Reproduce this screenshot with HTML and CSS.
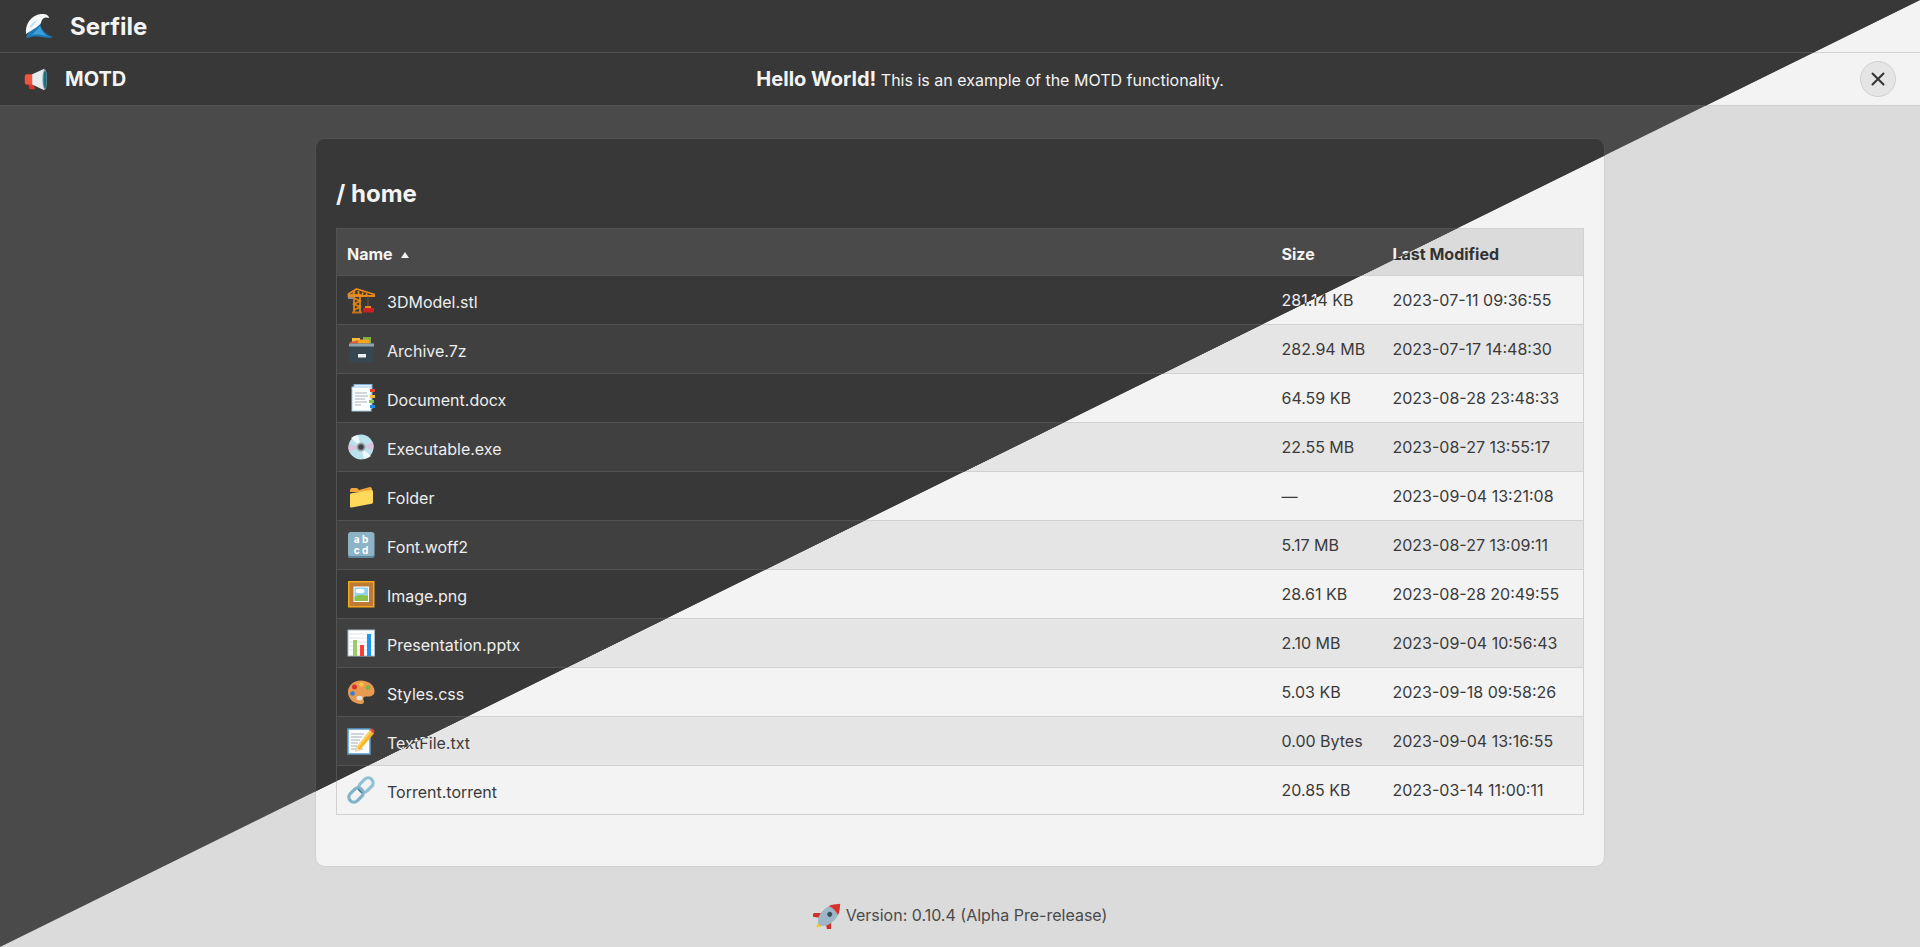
FILE: index.html
```html
<!DOCTYPE html>
<html lang="en">
  <head>
    <meta charset="UTF-8" />
    <meta name="viewport" content="width=device-width, initial-scale=1.0" />
    <title>Serfile</title>
    <link rel="stylesheet" href="styles.css">
  </head>
  <body>
    <!-- Emoji drawn once, used by both themes -->
    <svg class="icon-defs" aria-hidden="true" xmlns="http://www.w3.org/2000/svg">
      <symbol id="i-wave" viewBox="0 0 28 28">
        <path d="M1.500 26C1 22 5 19 8 17c3-3 5-5 7-8 0 7 4 13 13 16-4 2-8 0-12 0-6-1-10 0-14.500 1Z" fill="#1d78b5"/>
        <path d="M6 23c3-2 6-5 9-9 1 4 3 7 7 10-5-1-10-2-16-1Z" fill="#39a0dc"/>
        <path d="M1 22C0 12 6 3 16 2c4-.5 8 1 8 4-4-1.500-7 0-8 5-3 4-9 7-15 11Z" fill="#f6fafc"/>
        <path d="M4 16c2-4 5-7 8-8-2 3-3 5-5 7Z" fill="#c4dfee"/>
      </symbol>
      <symbol id="i-megaphone" viewBox="0 0 28 28">
        <path d="M6 17h6l2 8h-6Z" fill="#d8362a"/>
        <rect x="3" y="9" width="10" height="11" rx="2" fill="#f0553f"/>
        <path d="M11 9 24 3v23l-13-6Z" fill="#e8ecee"/>
        <ellipse cx="24.500" cy="14.500" rx="2.500" ry="11" fill="#8aa7ad"/>
        <ellipse cx="24.800" cy="14.500" rx="1.800" ry="9.500" fill="#1f6f80"/>
      </symbol>
      <symbol id="i-crane" viewBox="0 0 28 28">
        <rect x="1" y="8" width="5" height="5" fill="#8a8f93"/>
        <path d="M7 27V9h6v18M7 12l6 3-6 3 6 3-6 3" fill="none" stroke="#e08618" stroke-width="1.800"/>
        <path d="M1.500 8 9.500 3 27.500 8.500v1.500H1.500ZM5 9.500l3-4m3-2 1 6m4-3-1 3m5-2-1 2" fill="none" stroke="#e8891c" stroke-width="1.800"/>
        <rect x="5" y="25.500" width="10" height="2" fill="#c9711a"/>
        <path d="M21 10v10" stroke="#6a5a40" stroke-width="1"/>
        <rect x="18" y="20" width="6" height="2" fill="#e8891c"/>
        <rect x="16" y="22" width="11" height="4.500" fill="#cf1f25"/>
      </symbol>
      <symbol id="i-box" viewBox="0 0 28 28">
        <rect x="5" y="3" width="8" height="7" fill="#f2c23e"/>
        <rect x="16" y="2" width="8" height="8" fill="#7cb342"/>
        <rect x="8" y="4.500" width="14" height="6" fill="#f5a623"/>
        <path d="M3 7l8-1.500V10H3Z" fill="#e8563f"/>
        <rect x="2" y="8.500" width="25" height="19" rx="1.500" fill="#37474f"/>
        <rect x="2" y="8.500" width="25" height="3" fill="#90a4ae"/>
        <rect x="11" y="19" width="8" height="3.500" fill="#eceff1"/>
      </symbol>
      <symbol id="i-doc" viewBox="0 0 28 28">
        <rect x="7" y="0.500" width="18" height="24" fill="#e3eff8" stroke="#7db3da"/>
        <rect x="5" y="3" width="19" height="24" fill="#fdfeff" stroke="#a9cce6"/>
        <path d="M8 9h12M8 12h13M8 15h10M8 18h12M8 21h6" stroke="#a6b0b7" stroke-width="1"/>
        <rect x="23" y="5" width="5" height="3" fill="#e8432e"/>
        <rect x="23" y="11" width="5" height="3" fill="#f5c02f"/>
        <rect x="22" y="16" width="5" height="3" fill="#8bc34a"/>
        <rect x="23" y="21" width="5" height="3" fill="#1e88e5"/>
      </symbol>
      <symbol id="i-cd" viewBox="0 0 28 28">
        <circle cx="14" cy="14" r="12.500" fill="#b9e2ec"/>
        <path d="M14 14 4 5a13 13 0 0 1 7-3ZM14 14l10 9a13 13 0 0 1-7 3Z" fill="#eef7f9"/>
        <path d="M14 14 26 9a13 13 0 0 1 0 8ZM14 14 2 19a13 13 0 0 1 0-8Z" fill="#d9c6dc"/>
        <circle cx="14" cy="14" r="4.500" fill="#9aa7ac"/>
        <circle cx="14" cy="14" r="2.800" fill="#3d4548"/>
      </symbol>
      <symbol id="i-folder" viewBox="0 0 28 28">
        <path d="M3 8c0-1 1-2 2-2h5l2 2 11-3c1 0 2 1 2 2v3H3Z" fill="#f2a53c"/>
        <path d="M3 13c0-1 .5-1.500 1.500-1.700L24 8c1.200-.2 2 .5 2 1.500V20c0 1-.5 1.500-1.500 1.700L4.500 25.500c-1 .2-1.500-.3-1.500-1.300Z" fill="#ffd95c"/>
      </symbol>
      <symbol id="i-abcd" viewBox="0 0 28 28">
        <rect x="1" y="1" width="26.500" height="26" rx="3" fill="#8cb3c6"/>
        <path d="M1 22v2a3 3 0 0 0 3 3h20a3 3 0 0 0 3.500-3v-2a3 3 0 0 1-3 3H4a3 3 0 0 1-3-3Z" fill="#5d8aa0"/>
        <text class="icon-letters" x="14" y="12" text-anchor="middle">a b</text>
        <text class="icon-letters" x="14" y="23" text-anchor="middle">c d</text>
      </symbol>
      <symbol id="i-image" viewBox="0 0 28 28">
        <rect x="1" y="1" width="26.500" height="26.500" fill="#f5a81c"/>
        <rect x="2.500" y="2.500" width="23.500" height="23.500" fill="#bd7a35"/>
        <rect x="6.500" y="6.500" width="15.500" height="15.500" fill="#fff"/>
        <rect x="7.500" y="7.500" width="13.500" height="13.500" fill="#8ed2f2"/>
        <path d="M7.500 17c4-2.500 8-2.500 13.500-1v5H7.500Z" fill="#8bc34a"/>
        <ellipse cx="13" cy="11" rx="4.500" ry="2.300" fill="#fff"/>
      </symbol>
      <symbol id="i-chart" viewBox="0 0 28 28">
        <rect x="1" y="1" width="26.500" height="26" fill="#fff" stroke="#a8bcc8"/>
        <path d="M2 5h25M2 9h25M2 13h25M2 17h25M2 21h25" stroke="#dfe5e9" stroke-width="1"/>
        <rect x="6" y="11" width="4" height="16" fill="#9ccc65"/>
        <rect x="13" y="16" width="4" height="11" fill="#f44336"/>
        <rect x="20" y="5" width="4" height="22" fill="#1e96f0"/>
      </symbol>
      <symbol id="i-palette" viewBox="0 0 28 28">
        <path d="M14 2.500C6 2.500 1 8 1 14c0 7 6 12 13 12 3 0 3.500-2 2.500-4-1-2 .5-4 3.500-3.500 5 .5 8-2 7.500-6C27 6 20 2.500 14 2.500Z" fill="#e89a50"/>
        <circle cx="7.500" cy="9" r="2.500" fill="#d9342b"/>
        <circle cx="14.500" cy="6.500" r="2.300" fill="#f7c535"/>
        <circle cx="21" cy="9.500" r="2.300" fill="#7cb342"/>
        <circle cx="5.500" cy="15.500" r="2.300" fill="#2f7fd6"/>
        <ellipse cx="12.500" cy="20" rx="3" ry="2.300" fill="#dfe3e4"/>
      </symbol>
      <symbol id="i-memo" viewBox="0 0 28 28">
        <rect x="1" y="2" width="22" height="25" fill="#fbfdff" stroke="#5c9fd0" stroke-width="1.500"/>
        <path d="M4 7h13M4 10h11M4 13h9M4 16h7M4 19h6M4 22h12" stroke="#a3adb3" stroke-width="1"/>
        <path d="M23 3l4 3.500L13 23l-5 2 1.500-5Z" fill="#f7b52c"/>
        <path d="M23 3l1.500 1.300L11 21l-1.500-1Z" fill="#fcd667"/>
        <path d="M23 3l1-1.500c1-.5 3 1 3.500 2.500l-.5 2.500Z" fill="#e2463a"/>
        <path d="M9.500 20 8 25l5-2Z" fill="#f3dcb5"/>
      </symbol>
      <symbol id="i-link" viewBox="0 0 28 28">
        <rect x="11" y="4" width="16" height="10" rx="5" transform="rotate(-45 19 9)" fill="none" stroke="#8fc0d6" stroke-width="3.200"/>
        <rect x="1" y="14" width="16" height="10" rx="5" transform="rotate(-45 9 19)" fill="none" stroke="#7fb3cb" stroke-width="3.200"/>
        <path d="M11 13l4 4" stroke="#4d8098" stroke-width="1.500"/>
      </symbol>
      <symbol id="i-rocket" viewBox="0 0 28 28">
        <g transform="translate(2 0) rotate(-45 14 14)">
          <path d="M-4 14l5-3v6Z" fill="#f7c535"/>
          <path d="M5 9 0 2h5l6 6ZM5 19 0 26h5l6-6Z" fill="#c8322b"/>
          <path d="M0 14c2-6 8-7.500 14-7.500 5 0 9 2 13 7.500-4 5.500-8 7.500-13 7.500-6 0-12-1.500-14-7.500Z" fill="#9db7c7"/>
          <path d="M20 7.500c4 1 6 3.500 10 6.500-4 3-6 5.500-10 6.500 2-3 2-10 0-13Z" fill="#d9342b"/>
          <circle cx="15" cy="14" r="2.500" fill="#37505f"/>
        </g>
      </symbol>
    </svg>

    <!-- [1] Light theme, underneath -->
    <div class="page theme-light">
      <header class="navbar">
        <svg class="icon"><use href="#i-wave"/></svg>
        <span class="brand">Serfile</span>
      </header>
      <div class="motd">
        <svg class="icon icon-motd"><use href="#i-megaphone"/></svg>
        <strong class="motd-label">MOTD</strong>
        <p class="motd-text"><strong>Hello World!</strong> This is an example of the MOTD functionality.</p>
        <button class="motd-close" type="button" aria-label="Close">
          <svg width="14" height="14" viewBox="0 0 14 14"><path d="M1.500 1.500l11 11m0-11-11 11"/></svg>
        </button>
      </div>
      <main class="card">
        <h1 class="path">/ home</h1>
        <table class="files">
          <colgroup><col /><col class="col-size" /><col class="col-date" /></colgroup>
          <thead>
            <tr><th>Name <i class="sort"></i></th><th>Size</th><th>Last Modified</th></tr>
          </thead>
          <tbody>
            <tr><td><a class="file"><svg class="icon"><use href="#i-crane"/></svg><span>3DModel.stl</span></a></td><td>281.14 KB</td><td>2023-07-11 09:36:55</td></tr>
            <tr><td><a class="file"><svg class="icon"><use href="#i-box"/></svg><span>Archive.7z</span></a></td><td>282.94 MB</td><td>2023-07-17 14:48:30</td></tr>
            <tr><td><a class="file"><svg class="icon"><use href="#i-doc"/></svg><span>Document.docx</span></a></td><td>64.59 KB</td><td>2023-08-28 23:48:33</td></tr>
            <tr><td><a class="file"><svg class="icon"><use href="#i-cd"/></svg><span>Executable.exe</span></a></td><td>22.55 MB</td><td>2023-08-27 13:55:17</td></tr>
            <tr><td><a class="file"><svg class="icon"><use href="#i-folder"/></svg><span>Folder</span></a></td><td>—</td><td>2023-09-04 13:21:08</td></tr>
            <tr><td><a class="file"><svg class="icon"><use href="#i-abcd"/></svg><span>Font.woff2</span></a></td><td>5.17 MB</td><td>2023-08-27 13:09:11</td></tr>
            <tr><td><a class="file"><svg class="icon"><use href="#i-image"/></svg><span>Image.png</span></a></td><td>28.61 KB</td><td>2023-08-28 20:49:55</td></tr>
            <tr><td><a class="file"><svg class="icon"><use href="#i-chart"/></svg><span>Presentation.pptx</span></a></td><td>2.10 MB</td><td>2023-09-04 10:56:43</td></tr>
            <tr><td><a class="file"><svg class="icon"><use href="#i-palette"/></svg><span>Styles.css</span></a></td><td>5.03 KB</td><td>2023-09-18 09:58:26</td></tr>
            <tr><td><a class="file"><svg class="icon"><use href="#i-memo"/></svg><span>TextFile.txt</span></a></td><td>0.00 Bytes</td><td>2023-09-04 13:16:55</td></tr>
            <tr><td><a class="file"><svg class="icon"><use href="#i-link"/></svg><span>Torrent.torrent</span></a></td><td>20.85 KB</td><td>2023-03-14 11:00:11</td></tr>
          </tbody>
        </table>
      </main>
      <footer class="version">
        <svg class="icon"><use href="#i-rocket"/></svg>
        <span>Version: 0.10.4 (Alpha Pre-release)</span>
      </footer>
    </div>

    <!-- [2] Dark theme, clipped to the top left triangle -->
    <div class="page theme-dark">
      <header class="navbar">
        <svg class="icon"><use href="#i-wave"/></svg>
        <span class="brand">Serfile</span>
      </header>
      <div class="motd">
        <svg class="icon icon-motd"><use href="#i-megaphone"/></svg>
        <strong class="motd-label">MOTD</strong>
        <p class="motd-text"><strong>Hello World!</strong> This is an example of the MOTD functionality.</p>
        <button class="motd-close" type="button" aria-label="Close">
          <svg width="14" height="14" viewBox="0 0 14 14"><path d="M1.500 1.500l11 11m0-11-11 11"/></svg>
        </button>
      </div>
      <main class="card">
        <h1 class="path">/ home</h1>
        <table class="files">
          <colgroup><col /><col class="col-size" /><col class="col-date" /></colgroup>
          <thead>
            <tr><th>Name <i class="sort"></i></th><th>Size</th><th>Last Modified</th></tr>
          </thead>
          <tbody>
            <tr><td><a class="file"><svg class="icon"><use href="#i-crane"/></svg><span>3DModel.stl</span></a></td><td>281.14 KB</td><td>2023-07-11 09:36:55</td></tr>
            <tr><td><a class="file"><svg class="icon"><use href="#i-box"/></svg><span>Archive.7z</span></a></td><td>282.94 MB</td><td>2023-07-17 14:48:30</td></tr>
            <tr><td><a class="file"><svg class="icon"><use href="#i-doc"/></svg><span>Document.docx</span></a></td><td>64.59 KB</td><td>2023-08-28 23:48:33</td></tr>
            <tr><td><a class="file"><svg class="icon"><use href="#i-cd"/></svg><span>Executable.exe</span></a></td><td>22.55 MB</td><td>2023-08-27 13:55:17</td></tr>
            <tr><td><a class="file"><svg class="icon"><use href="#i-folder"/></svg><span>Folder</span></a></td><td>—</td><td>2023-09-04 13:21:08</td></tr>
            <tr><td><a class="file"><svg class="icon"><use href="#i-abcd"/></svg><span>Font.woff2</span></a></td><td>5.17 MB</td><td>2023-08-27 13:09:11</td></tr>
            <tr><td><a class="file"><svg class="icon"><use href="#i-image"/></svg><span>Image.png</span></a></td><td>28.61 KB</td><td>2023-08-28 20:49:55</td></tr>
            <tr><td><a class="file"><svg class="icon"><use href="#i-chart"/></svg><span>Presentation.pptx</span></a></td><td>2.10 MB</td><td>2023-09-04 10:56:43</td></tr>
            <tr><td><a class="file"><svg class="icon"><use href="#i-palette"/></svg><span>Styles.css</span></a></td><td>5.03 KB</td><td>2023-09-18 09:58:26</td></tr>
            <tr><td><a class="file"><svg class="icon"><use href="#i-memo"/></svg><span>TextFile.txt</span></a></td><td>0.00 Bytes</td><td>2023-09-04 13:16:55</td></tr>
            <tr><td><a class="file"><svg class="icon"><use href="#i-link"/></svg><span>Torrent.torrent</span></a></td><td>20.85 KB</td><td>2023-03-14 11:00:11</td></tr>
          </tbody>
        </table>
      </main>
      <footer class="version">
        <svg class="icon"><use href="#i-rocket"/></svg>
        <span>Version: 0.10.4 (Alpha Pre-release)</span>
      </footer>
    </div>
  </body>
</html>
```

FILE: styles.css
```css
/*
  Global styles
*/

* {
  margin: 0;
  padding: 0;
  box-sizing: border-box;
}
body {
  height: 100vh;
  overflow: hidden;
  position: relative;
  font-family: "Inter", sans-serif;
  font-size: 16px;
}
.icon-defs {
  display: none;
}
.icon-letters {
  fill: #fff;
  font-family: "Inter", sans-serif;
  font-size: 10px;
  font-weight: 700;
}

/*
  Themes
*/

.theme-light {
  --bg: #dbdbdb;
  --surface: #f3f3f3;
  --stripe: #e5e5e5;
  --head: #dbdbdb;
  --line: #d1d1d1;
  --title: #333333;
  --text: #3a3a3a;
  --muted: #4a4a4a;
}
.theme-dark {
  --bg: #4a4a4a;
  --surface: #383838;
  --stripe: #404040;
  --head: #4a4a4a;
  --line: #525252;
  --title: #f3f3f3;
  --text: #eeeeee;
  --muted: #dadada;
  position: absolute;
  inset: 0;
  clip-path: polygon(0 0, 100% 0, 0 100%);
}

/*
  Component styles
*/

.page {
  height: 100vh;
  background-color: var(--bg);
  color: var(--text);
}
.icon {
  width: 28px;
  height: 28px;
  flex: none;
}

/* [1] Top bars */
.navbar,
.motd {
  display: flex;
  align-items: center;
  background-color: var(--surface);
  border-bottom: 1px solid var(--line);
  padding-left: 25px;
  color: var(--title);
}
.navbar {
  height: 53px;
  gap: 17px;
}
.brand {
  font-size: 24px;
  font-weight: 700;
}
.motd {
  height: 53px;
  padding-right: 24px;
}
.icon-motd {
  width: 26px;
  height: 26px;
  margin-left: -3px;
}
.motd-label {
  font-size: 20px;
  margin-left: 17px;
}
.motd-text {
  flex: 1;
  text-align: center;
  font-size: 16px;
  margin-left: -6px;
}
.motd-text strong {
  font-size: 20px;
}
.motd-close {
  width: 36px;
  height: 36px;
  display: grid;
  place-items: center;
  border-radius: 50%;
  border: 1px solid var(--line);
  background-color: var(--stripe);
}
.motd-close path {
  fill: none;
  stroke: var(--title);
  stroke-width: 2;
  stroke-linecap: round;
}

/* [2] File card */
.card {
  width: 1290px;
  height: 729px;
  margin: 32px auto 0;
  padding: 0 20px;
  background-color: var(--surface);
  border: 1px solid var(--line);
  border-radius: 10px;
}
.path {
  height: 89px;
  padding-top: 39px;
  font-size: 24px;
  line-height: 32px;
  font-weight: 700;
  color: var(--title);
}
.files {
  width: 100%;
  table-layout: fixed;
  border-collapse: collapse;
  border: 1px solid var(--line);
}
.col-size {
  width: 111px;
}
.col-date {
  width: 201px;
}
.files th,
.files td {
  padding: 0 10px;
  text-align: left;
  border-bottom: 1px solid var(--line);
}
.files th {
  height: 47px;
  padding-top: 4px;
  font-size: 16px;
  color: var(--title);
  background-color: var(--head);
}
.files td {
  height: 49px;
}
.files tbody tr:nth-child(even) {
  background-color: var(--stripe);
}
.sort {
  display: inline-block;
  margin-left: 5px;
  vertical-align: 2px;
  border-left: 4px solid transparent;
  border-right: 4px solid transparent;
  border-bottom: 6px solid var(--title);
}
.file {
  display: flex;
  align-items: center;
  gap: 12px;
}
.file span {
  padding-top: 3px;
}

/* [3] Footer */
.version {
  display: flex;
  justify-content: center;
  align-items: center;
  gap: 5px;
  height: 32px;
  margin-top: 32px;
  color: var(--muted);
}
```
